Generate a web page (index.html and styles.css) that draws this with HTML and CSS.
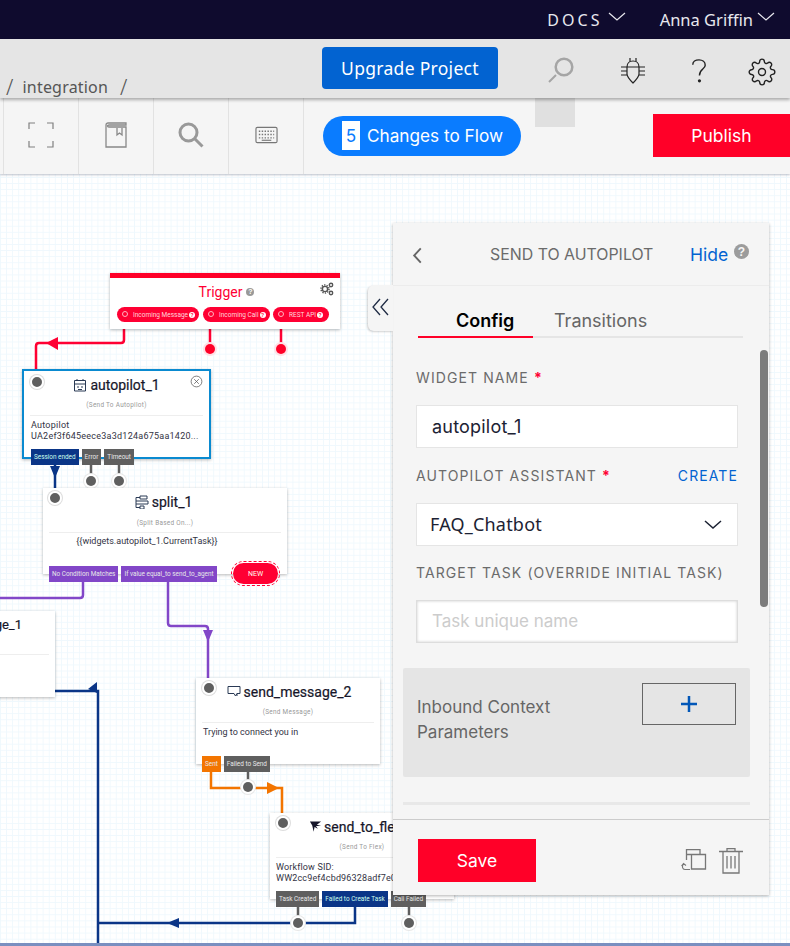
FILE: index.html
```html
<!DOCTYPE html>
<html lang="en">
<head>
<meta charset="utf-8">
<title>Flow editor</title>
<link rel="stylesheet" href="styles.css">
</head>
<body>
<div class="page">
  <header class="topbar">
    <a class="top-link docs">DOCS<svg class="chev" viewBox="0 0 18 10"><path d="M1 1l8 7 8-7"/></svg></a>
    <a class="top-link user">Anna Griffin<svg class="chev" viewBox="0 0 18 10"><path d="M1 1l8 7 8-7"/></svg></a>
  </header>
  <div class="subbar">
    <div class="crumbs"><span class="slash">/</span><span>integration</span><span class="slash second">/</span></div>
    <button class="upgrade">Upgrade Project</button>
    <div class="sub-icons">
      <svg class="ic-mag" viewBox="0 0 30 30"><circle cx="18" cy="11" r="8.300"/><path d="M10 19L3 26" class="thin"/></svg>
      <svg class="ic-bug" viewBox="0 0 24 26"><path d="M6 9C6 5 9 3 12 3S18 5 18 9V16C18 19 15 22 12 25 9 22 6 19 6 16ZM9 0V3.500M15 0V3.500M6 9H18M0 9H6M18 9H24M0 13H6M18 13H24M0 17H6M18 17H24"/></svg>
      <svg class="ic-help" viewBox="0 0 18 28"><path d="M2 7C2 3.500 5 1.500 9 1.500S16 4 16 7.500C16 12 9.500 12 9.500 19"/><circle class="solid-dot" cx="9.500" cy="25" r="1.800"/></svg>
      <svg class="ic-gear" viewBox="0 0 24 24"><circle cx="12" cy="12" r="3"/><path d="M19.400 15a1.650 1.650 0 0 0 .33 1.820l.06.06a2 2 0 0 1 0 2.830 2 2 0 0 1-2.830 0l-.06-.06a1.650 1.650 0 0 0-1.820-.33 1.650 1.650 0 0 0-1 1.510V21a2 2 0 0 1-2 2 2 2 0 0 1-2-2v-.09A1.650 1.650 0 0 0 9 19.400a1.650 1.650 0 0 0-1.820.33l-.06.06a2 2 0 0 1-2.830 0 2 2 0 0 1 0-2.830l.06-.06a1.650 1.650 0 0 0 .33-1.820 1.650 1.650 0 0 0-1.510-1H3a2 2 0 0 1-2-2 2 2 0 0 1 2-2h.09A1.650 1.650 0 0 0 4.600 9a1.650 1.650 0 0 0-.33-1.820l-.06-.06a2 2 0 0 1 0-2.830 2 2 0 0 1 2.830 0l.06.06a1.650 1.650 0 0 0 1.820.33H9a1.650 1.650 0 0 0 1-1.510V3a2 2 0 0 1 2-2 2 2 0 0 1 2 2v.09a1.650 1.650 0 0 0 1 1.510 1.650 1.650 0 0 0 1.820-.33l.06-.06a2 2 0 0 1 2.830 0 2 2 0 0 1 0 2.830l-.06.06a1.650 1.650 0 0 0-.33 1.820V9a1.650 1.650 0 0 0 1.510 1H21a2 2 0 0 1 2 2 2 2 0 0 1-2 2h-.09a1.650 1.650 0 0 0-1.510 1z"/></svg>
    </div>
  </div>
  <div class="toolbar">
    <div class="tool-cell edge"></div>
    <div class="tool-cell"><svg class="ic-frame" viewBox="0 0 26 26"><path d="M7 1H1V7M19 1H25V7M1 19V25H7M25 19V25H19"/></svg></div>
    <div class="tool-cell"><svg class="ic-book" viewBox="0 0 22 26"><path d="M1 25V3C1 1.500 2 1 3 1H21V3H4C2 3 2 5 4 5H21V25ZM12 6V13L14.500 11 17 13V6"/></svg></div>
    <div class="tool-cell"><svg class="ic-search" viewBox="0 0 26 26"><circle cx="10.500" cy="10.500" r="8.500"/><path d="M17 17L24.500 24.500"/></svg></div>
    <div class="tool-cell"><svg class="ic-keys" viewBox="0 0 24 18"><rect x="1" y="1" width="22" height="16" rx="1.500"/><path class="dots" d="M4 5H20M4 8.500H20M4 12H20"/><path d="M7 14.500H17"/></svg></div>
    <button class="changes"><span class="count">5</span>Changes to Flow</button>
    <span class="tool-ghost"></span>
    <button class="publish">Publish</button>
  </div>
  <main class="canvas">
    <svg class="wires" viewBox="0 0 790 772">
      <g class="w-red">
        <path d="M124 148V166Q124 169 121 169H39Q36 169 36 172V196"/>
        <path d="M210 148V172M281 148V172"/>
        <path class="fill" d="M46 169l12-6v13z"/>
      </g>
      <g class="w-blue">
        <path d="M55 288V314"/>
        <path class="fill" d="M50 292h10l-5 12z"/>
        <path d="M55 517H98V772"/>
        <path d="M355 731V749H98"/>
        <path class="fill" d="M88 515l9-7v11z"/>
        <path class="fill" d="M167 749l12-5v10z"/>
      </g>
      <g class="w-purple">
        <path d="M83 405V421Q83 424 80 424H0"/>
        <path d="M168 405V449Q168 452 171 452H205Q208 452 208 455V505"/>
        <path class="fill" d="M203 456h10l-5 12z"/>
      </g>
      <g class="w-orange">
        <path d="M211 596V614H282V640"/>
        <path class="fill" d="M267 608l12 6-12 6z"/>
      </g>
      <g class="w-gray">
        <path d="M91 288V305M119 288V305M248 596V612M298 731V748M409 731V748"/>
      </g>
    </svg>

    <section class="node trigger">
      <h3 class="trigger-title">Trigger <span class="q grey">?</span></h3>
      <svg class="ic-cogs" viewBox="0 0 14 14"><circle cx="5" cy="7" r="2.600"/><circle class="teeth" cx="5" cy="7" r="4"/><circle cx="11" cy="3" r="1.700"/><circle cx="11" cy="11" r="1.700"/></svg>
      <div class="pills">
        <span class="pill p1"><i class="ring"></i>Incoming Message <span class="q white">?</span></span>
        <span class="pill p2"><i class="ring"></i>Incoming Call <span class="q white">?</span></span>
        <span class="pill p3"><i class="ring"></i>REST API <span class="q white">?</span></span>
      </div>
    </section>
    <i class="dot red d-call"></i>
    <i class="dot red d-rest"></i>

    <section class="node auto">
      <i class="port"></i>
      <h3 class="n-title"><svg class="ni" viewBox="0 0 14 14"><path d="M1.500 13V2.500H12.500V13H1.500ZM1.500 6H12.500M4 1V3M10 1V3M4 9H6M8 9H10M5 11.500H9"/></svg>autopilot_1</h3>
      <svg class="ic-x" viewBox="0 0 14 14"><circle cx="7" cy="7" r="5.800"/><path d="M4.500 4.500L9.500 9.500M9.500 4.500L4.500 9.500"/></svg>
      <p class="n-type">(Send To Autopilot)</p>
      <p class="n-body">Autopilot<br>UA2ef3f645eece3a3d124a675aa1420...</p>
      <div class="tags">
        <span class="tag navy">Session ended</span><span class="tag dark">Error</span><span class="tag dark">Timeout</span>
      </div>
    </section>
    <i class="dot d-error"></i>
    <i class="dot d-timeout"></i>

    <section class="node split">
      <i class="port"></i>
      <h3 class="n-title"><svg class="ni" viewBox="0 0 14 14"><path d="M5 1H12V4H5ZM1 2.500H5M1 6H13V9H1ZM1 2.500V6M1 9V12.500H5M5 11H9V14H5Z"/></svg>split_1</h3>
      <p class="n-type">(Split Based On...)</p>
      <p class="n-body center">{{widgets.autopilot_1.CurrentTask}}</p>
      <div class="tags">
        <span class="tag purple">No Condition Matches</span><span class="tag purple">If value equal_to send_to_agent</span>
      </div>
      <span class="new">NEW</span>
    </section>

    <section class="node msg1">
      <h3 class="n-title left">ge_1</h3>
    </section>

    <section class="node msg2">
      <i class="port"></i>
      <h3 class="n-title"><svg class="ni" viewBox="0 0 14 14"><path d="M1 1.500H13V8.500H10L8.500 11 7 8.500H1ZM10 8.500V11"/></svg>send_message_2</h3>
      <p class="n-type">(Send Message)</p>
      <p class="n-body">Trying to connect you in</p>
      <div class="tags">
        <span class="tag orange">Sent</span><span class="tag dark">Failed to Send</span>
      </div>
    </section>
    <i class="dot d-failed"></i>

    <section class="node flex">
      <i class="port"></i>
      <h3 class="n-title"><svg class="ni solid" viewBox="0 0 14 14"><path d="M1 1H13L8.500 4.500 13 6H7.500L9.500 9 6 7 5 12 3.500 5.500Z"/></svg>send_to_flex</h3>
      <p class="n-type">(Send To Flex)</p>
      <p class="n-body">Workflow SID:<br>WW2cc9ef4cbd96328adf7e0ad4c</p>
      <div class="tags">
        <span class="tag dark">Task Created</span><span class="tag navy">Failed to Create Task</span><span class="tag dark">Call Failed</span>
      </div>
    </section>
    <i class="dot d-task"></i>
    <i class="dot d-call-failed"></i>

    <aside class="panel">
      <div class="collapse"><svg viewBox="0 0 20 20"><path d="M9 2L2 10 9 18M17 2L10 10 17 18"/></svg></div>
      <div class="p-head">
        <svg class="back" viewBox="0 0 10 18"><path d="M9 1.500L2 9 9 16.500"/></svg>
        <span class="p-title">SEND TO AUTOPILOT</span>
        <a class="hide">Hide</a><span class="q big">?</span>
      </div>
      <div class="p-scroll">
        <nav class="tabs"><span class="tab on">Config</span><span class="tab">Transitions</span></nav>
        <div class="p-label name-label">WIDGET NAME <b>*</b></div>
        <div class="field">autopilot_1</div>
        <div class="p-label row"><span>AUTOPILOT ASSISTANT <b>*</b></span><a>CREATE</a></div>
        <div class="field select">FAQ_Chatbot<svg viewBox="0 0 18 10"><path d="M1 1l8 7 8-7"/></svg></div>
        <div class="p-label target">TARGET TASK (OVERRIDE INITIAL TASK)</div>
        <div class="field ph">Task unique name</div>
        <div class="params">
          <span class="params-text">Inbound Context Parameters</span>
          <span class="plus"><svg viewBox="0 0 18 18"><path d="M9 1V17M1 9H17"/></svg></span>
        </div>
        <div class="rule"></div>
        <div class="thumb"></div>
      </div>
      <div class="p-foot">
        <button class="save">Save</button>
        <svg class="ic-copy" viewBox="0 0 26 22"><path d="M5.500 11V.5H19V5.500M10.500 5.500H24.500V20H10.500ZM5.500 11V5.500H10.500"/><path class="thin" d="M9 20.500H4C1.500 20.500 .5 17.500 2.500 15M.5 17L2.500 14.500 5 16.500"/></svg>
        <svg class="ic-trash" viewBox="0 0 24 26"><path d="M0 3.500H24M8 3.500V.7H16V3.500M4 3.500V25H20V3.500M8 8V20.500M12 8V20.500M16 8V20.500"/></svg>
      </div>
    </aside>
    <div class="bottom-edge"></div>
  </main>
</div>
</body>
</html>
```

FILE: styles.css
```css
* { box-sizing: border-box; }
html, body { margin: 0; padding: 0; }
body { font-family: Inter, "Noto Sans", sans-serif; color: #1a1a2a; background: #fff; }
.page { width: 790px; height: 946px; overflow: hidden; display: flex; flex-direction: column; }
svg { display: block; fill: none; }
button { font-family: inherit; border: 0; color: #fff; padding: 0; }

.topbar { height: 39px; flex: none; background: #0f0b2e; color: #e8e8ee; display: flex; align-items: center; justify-content: flex-end; padding: 0 15px 0 0; font-family: "Noto Sans", sans-serif; font-size: 16.500px; }
.top-link { display: flex; align-items: center; }
.docs { font-size: 16px; letter-spacing: 3.100px; margin-right: 34px; }
.chev { width: 18px; height: 10px; stroke: #e8e8ee; stroke-width: 1.200; margin-top: -5px; }
.docs .chev { margin-left: 5px; }
.user .chev { margin-left: 4px; }

.subbar { height: 59px; flex: none; background: #e5e5e5; box-shadow: 0 2px 3px rgba(0,0,0,.3); position: relative; z-index: 2; display: flex; }
.crumbs { position: absolute; left: 6px; top: 37px; font-family: "Noto Sans", sans-serif; font-size: 16px; letter-spacing: .2px; color: #555; display: flex; align-items: center; gap: 9px; line-height: 22px; }
.slash { font-size: 21px; font-weight: 300; }
.crumbs .second { margin-left: 3px; }
.upgrade { position: absolute; left: 322px; top: 8px; width: 176px; height: 42px; background: #0263d1; border-radius: 4px; font-family: "Noto Sans", sans-serif; font-size: 17.500px; letter-spacing: .3px; padding-bottom: 1px; }
.sub-icons svg { position: absolute; }
.ic-mag { left: 546px; top: 17px; width: 30px; height: 30px; stroke: #a5a5a5; stroke-width: 2.500; }
.ic-mag .thin { stroke-width: 2; }
.ic-bug { left: 621px; top: 19px; width: 24px; height: 26px; stroke: #222; stroke-width: 1.200; }
.ic-help { left: 691px; top: 19px; width: 16px; height: 26px; stroke: #222; stroke-width: 1.600; }
.ic-help .solid-dot { fill: #222; stroke: none; }
.ic-gear { left: 748px; top: 19px; width: 28px; height: 28px; stroke: #222; stroke-width: 1.200; }

.toolbar { height: 76px; flex: none; background: #f5f5f5; display: flex; align-items: stretch; position: relative; box-shadow: 0 1px 2px rgba(120,130,150,.5); z-index: 1; }
.tool-cell { width: 75px; border-right: 1px solid #e2e2e2; display: flex; align-items: center; justify-content: center; padding-bottom: 3px; }
.tool-cell.edge { width: 4px; }
.ic-frame { width: 26px; height: 26px; stroke: #808080; stroke-width: 1.200; }
.ic-book { width: 22px; height: 26px; stroke: #888; stroke-width: 1.300; }
.ic-search { width: 26px; height: 26px; stroke: #999; stroke-width: 3; }
.ic-keys { width: 23px; height: 18px; stroke: #777; stroke-width: 1.200; }
.ic-keys .dots { stroke-dasharray: 1.500 1.500; stroke-width: 1.500; }
.changes { position: absolute; left: 323px; top: 18px; width: 198px; height: 40px; border-radius: 20px; background: #0a7cff; font-size: 17.200px; display: flex; align-items: center; padding-left: 19px; padding-bottom: 1px; }
.count { width: 18px; height: 29px; background: #fff; color: #0a7cff; display: flex; align-items: center; justify-content: center; margin-right: 7px; }
.tool-ghost { position: absolute; left: 535px; top: 0; width: 40px; height: 29px; background: #e0e0e0; }
.publish { position: absolute; left: 653px; top: 16px; width: 137px; height: 43px; background: #ff0028; font-size: 17.500px; }

.canvas { flex: 1; position: relative; overflow: hidden; background-color: #fff;
  background-image: linear-gradient(#eff8fd 1px, transparent 1px), linear-gradient(90deg, #eff8fd 1px, transparent 1px);
  background-size: 6.100px 6.100px; background-position: 0 3px; }
.wires { position: absolute; left: 0; top: 0; width: 790px; height: 772px; overflow: visible; stroke-width: 2.500; z-index: 0; }
.wires .fill { stroke: none; }
.w-red { stroke: #ff0033; } .w-red .fill { fill: #ff0033; }
.w-blue { stroke: #0a3587; } .w-blue .fill { fill: #0a3587; }
.w-purple { stroke: #8247c8; } .w-purple .fill { fill: #8247c8; }
.w-orange { stroke: #f37500; } .w-orange .fill { fill: #f37500; }
.w-gray { stroke: #5f5f5f; }

.node { position: absolute; background: #fff; box-shadow: 0 1px 3px rgba(0,0,0,.28); z-index: 1; font-family: Roboto, sans-serif; }
.port { position: absolute; width: 14px; height: 14px; border-radius: 50%; background: #5f5f5f; border: 2px solid #fff; box-shadow: 0 0 0 1px #ddd; left: 6px; top: 3px; }
.dot { position: absolute; width: 10px; height: 10px; border-radius: 50%; background: #5f5f5f; box-shadow: 0 0 0 2px #fff, 0 0 0 3px #e8e8e8; z-index: 1; }
.dot.red { background: #ff0028; box-shadow: 0 0 0 2px #ffe0e5; }
.d-call { left: 205px; top: 170px; }
.d-rest { left: 276px; top: 170px; }
.d-error { left: 86px; top: 302px; }
.d-timeout { left: 114px; top: 302px; }
.d-failed { left: 243px; top: 608px; }
.d-task { left: 293px; top: 744px; }
.d-call-failed { left: 404px; top: 744px; }

.trigger { left: 110px; top: 99px; width: 230px; height: 56px; border-top: 5px solid #ff0028; }
.trigger-title { margin: 4px 0 0; font-size: 14px; line-height: 20px; font-weight: 400; color: #ff0033; text-align: center; display: flex; justify-content: center; align-items: center; gap: 4px; padding-left: 3px; }
.q { display: inline-flex; align-items: center; justify-content: center; border-radius: 50%; font-weight: 700; font-family: "Liberation Sans", sans-serif; }
.q.grey { width: 8px; height: 8px; background: #999; color: #fff; font-size: 7px; }
.q.white { width: 6px; height: 6px; background: #fff; color: #ff0033; font-size: 5px; margin-left: 1px; }
.q.big { width: 15px; height: 15px; background: #9c9c9c; color: #f5f5f5; font-size: 12px; }
.ic-cogs { position: absolute; right: 6px; top: 4px; width: 14px; height: 14px; stroke: #555; stroke-width: 1.400; }
.ic-cogs .teeth { stroke-width: 1.500; stroke-dasharray: 1.300 1.200; }
.pills { position: absolute; left: 7px; top: 29px; display: flex; gap: 4px; }
.pill { height: 15px; border-radius: 8px; background: #ff0033; color: #ffd7dd; font-size: 6.500px; display: flex; align-items: center; padding: 0 3px 0 5px; white-space: nowrap; }
.p1 { width: 82px; } .p2 { width: 67px; } .p3 { width: 56px; margin-left: -1px; }
.ring { width: 6px; height: 6px; border-radius: 50%; border: 1px solid #ffb3bf; margin-right: 5px; margin-top: -2px; flex: none; }

.n-title { margin: 0; display: flex; justify-content: center; align-items: center; font-size: 14px; line-height: 20px; font-weight: 400; color: #16162a; -webkit-text-stroke: .2px #16162a; }
.ni { width: 14px; height: 14px; stroke: #2a3a55; stroke-width: 1; margin-right: 3px; }
.ni.solid { fill: #16162a; stroke: none; }
.n-type { margin: 0; text-align: center; font-size: 6.400px; line-height: 10px; color: #999; letter-spacing: .3px; }
.n-body { margin: 0; font-size: 9px; line-height: 11px; color: #333344; }
.n-body.center { text-align: center; }
.tags { position: absolute; display: flex; gap: 3px; }
.tag { height: 16px; color: #e8e8e8; font-size: 6.400px; display: flex; align-items: center; padding: 0 3px; white-space: nowrap; }
.tag.navy { background: #0a3587; color: #cfe; }
.tag.dark { background: #5f5f5f; }
.tag.purple { background: #8247c8; }
.tag.orange { background: #f37500; }

.auto { left: 22px; top: 195px; width: 189px; height: 90px; border: 2px solid #0a8ad0; }
.auto .n-title { position: absolute; left: 0; right: 0; top: 4px; }
.auto .port { left: 6px; top: 4px; }
.auto .n-type { position: absolute; left: 6px; right: 6px; top: 29px; padding-bottom: 5px; border-bottom: 1px solid #eee; }
.auto .n-body { position: absolute; left: 7px; top: 49px; white-space: nowrap; letter-spacing: .24px; }
.auto .tags { left: 7px; top: 78px; }
.ic-x { position: absolute; right: 6px; top: 4px; width: 13px; height: 13px; stroke: #555; stroke-width: .8; }

.split { left: 43px; top: 314px; width: 244px; height: 86px; }
.split .n-title { position: absolute; left: 0; right: 3px; top: 4px; }
.split .port { left: 5px; top: 3px; }
.split .n-type { position: absolute; left: 6px; right: 6px; top: 30px; border-bottom: 1px solid #eee; padding-bottom: 4px; }
.split .n-body { position: absolute; left: 0; right: 0; top: 48px; padding-right: 36px; }
.split .tags { left: 6px; top: 78px; }
.new { position: absolute; left: 190px; top: 75px; width: 45px; height: 21px; border-radius: 11px; background: #ff0033; color: #ffe; font-size: 7px; display: flex; align-items: center; justify-content: center; outline: 1px dashed #ff0033; outline-offset: 1px; }

.msg1 { left: -100px; top: 437px; width: 155px; height: 86px; }
.n-title.left { position: absolute; right: 0; top: 4px; width: 155px; justify-content: flex-end; padding-right: 33px; font-size: 13px; }
.msg1::after { content: ""; position: absolute; right: 6px; top: 43px; left: 0; border-top: 1px solid #eee; }

.msg2 { left: 196px; top: 504px; width: 184px; height: 86px; }
.msg2 .n-title { position: absolute; left: 0; right: 0; top: 4px; padding-left: 2px; }
.msg2 .n-type { position: absolute; left: 6px; right: 6px; top: 29px; border-bottom: 1px solid #eee; padding-bottom: 5px; }
.msg2 .n-body { position: absolute; left: 7px; top: 49px; }
.msg2 .tags { left: 6px; top: 78px; }

.flex { left: 270px; top: 639px; width: 184px; height: 86px; }
.flex .n-title { position: absolute; left: 39px; top: 4px; white-space: nowrap; justify-content: flex-start; }
.flex .ni { width: 13px; margin-right: 2px; }
.flex .n-type { position: absolute; left: 6px; right: 6px; top: 29px; border-bottom: 1px solid #eee; padding-bottom: 5px; }
.flex .n-body { position: absolute; left: 6px; top: 49px; white-space: nowrap; letter-spacing: .15px; }
.flex .tags { left: 6px; top: 78px; }

.panel { position: absolute; left: 393px; top: 49px; width: 376px; height: 672px; background: #f5f5f5; box-shadow: 0 1px 3px rgba(0,0,0,.3); z-index: 3; display: flex; flex-direction: column; color: #666; }
.collapse { position: absolute; left: -25px; top: 62px; width: 25px; height: 46px; background: #f5f5f5; border-radius: 6px 0 0 6px; box-shadow: -1px 1px 2px rgba(0,0,0,.18); display: flex; align-items: center; padding-left: 3px; }
.collapse svg { width: 20px; height: 20px; stroke: #1f2b44; stroke-width: 1.300; margin-top: -3px; }
.p-head { height: 63px; flex: none; position: relative; border-bottom: 1px solid #ececec; }
.back { position: absolute; left: 19px; top: 24px; width: 10px; height: 17px; stroke: #666; stroke-width: 2; }
.p-title { position: absolute; left: 97px; top: 22px; font-size: 15.900px; line-height: 20px; color: #6b6b6b; white-space: nowrap; }
.hide { position: absolute; left: 297px; top: 20px; font-size: 17.500px; line-height: 24px; color: #0263d1; }
.p-head .q.big { position: absolute; left: 341px; top: 21px; }
.p-scroll { flex: 1; position: relative; padding: 0 10px; min-height: 0; border-bottom: 1px solid #ccc; }
.tabs { display: flex; margin: 19px 15px 0 15px; border-bottom: 2px solid #e5e5e5; height: 33px; width: 325px; }
.tab { height: 33px; font-size: 18px; line-height: 32px; color: #666; padding-left: 21px; }
.tab.on { width: 115px; color: #000; font-weight: 600; border-bottom: 2px solid #ff0028; padding-left: 38px; }
.p-label { margin: 14px 0 0 13px; font-size: 14px; letter-spacing: 1.100px; line-height: 20px; color: #6b6b6b; font-weight: 400; }
.p-label b { color: #ff0033; }
.name-label { margin-top: 30px; }
.p-label.row { display: flex; justify-content: space-between; width: 322px; margin-top: 18px; }
.p-label.row a { color: #0263d1; }
.p-label.target { margin-top: 17px; }
.field { margin: 17px 0 0 13px; width: 322px; height: 43px; background: #fff; border: 1px solid #e5e5e5; font-size: 18px; letter-spacing: .2px; line-height: 41px; padding-left: 15px; color: #1c2233; }
.field.select { padding-left: 13px; display: flex; align-items: center; justify-content: space-between; padding-right: 15px; font-family: "Noto Sans", sans-serif; }
.select svg { width: 18px; height: 10px; stroke: #1c2233; stroke-width: 1.500; }
.field.ph { color: #ccc; font-size: 17px; letter-spacing: 0; padding-left: 15px; box-shadow: inset 0 0 3px rgba(0,0,0,.2); border-color: #ddd; }
.params { margin-top: 25px; width: 347px; height: 109px; background: #e5e5e5; border-radius: 2px; position: relative; }
.params-text { position: absolute; left: 14px; top: 27px; width: 170px; font-size: 17px; line-height: 25px; color: #666; }
.plus { position: absolute; left: 239px; top: 15px; width: 94px; height: 42px; border: 1px solid #666; display: flex; align-items: center; justify-content: center; }
.plus svg { width: 18px; height: 18px; stroke: #0257b8; stroke-width: 2.500; }
.rule { margin-top: 25px; width: 347px; height: 3px; background: #e8e8e8; }
.thumb { position: absolute; right: 1px; top: 64px; width: 8px; height: 257px; background: #7c7c7c; border-radius: 4px; }
.p-foot { height: 75px; flex: none; position: relative; }
.save { position: absolute; left: 25px; top: 19px; width: 118px; height: 43px; background: #ff0028; font-size: 17.500px; }
.ic-copy { position: absolute; left: 288px; top: 29px; width: 26px; height: 22px; stroke: #777; stroke-width: 1.300; }
.ic-copy .thin { stroke-width: 1.100; }
.ic-trash { position: absolute; left: 326px; top: 28px; width: 24px; height: 26px; stroke: #777; stroke-width: 1.300; }

.bottom-edge { position: absolute; left: 0; right: 0; bottom: 0; height: 3px; background: #7b8fc0; z-index: 4; }
```
